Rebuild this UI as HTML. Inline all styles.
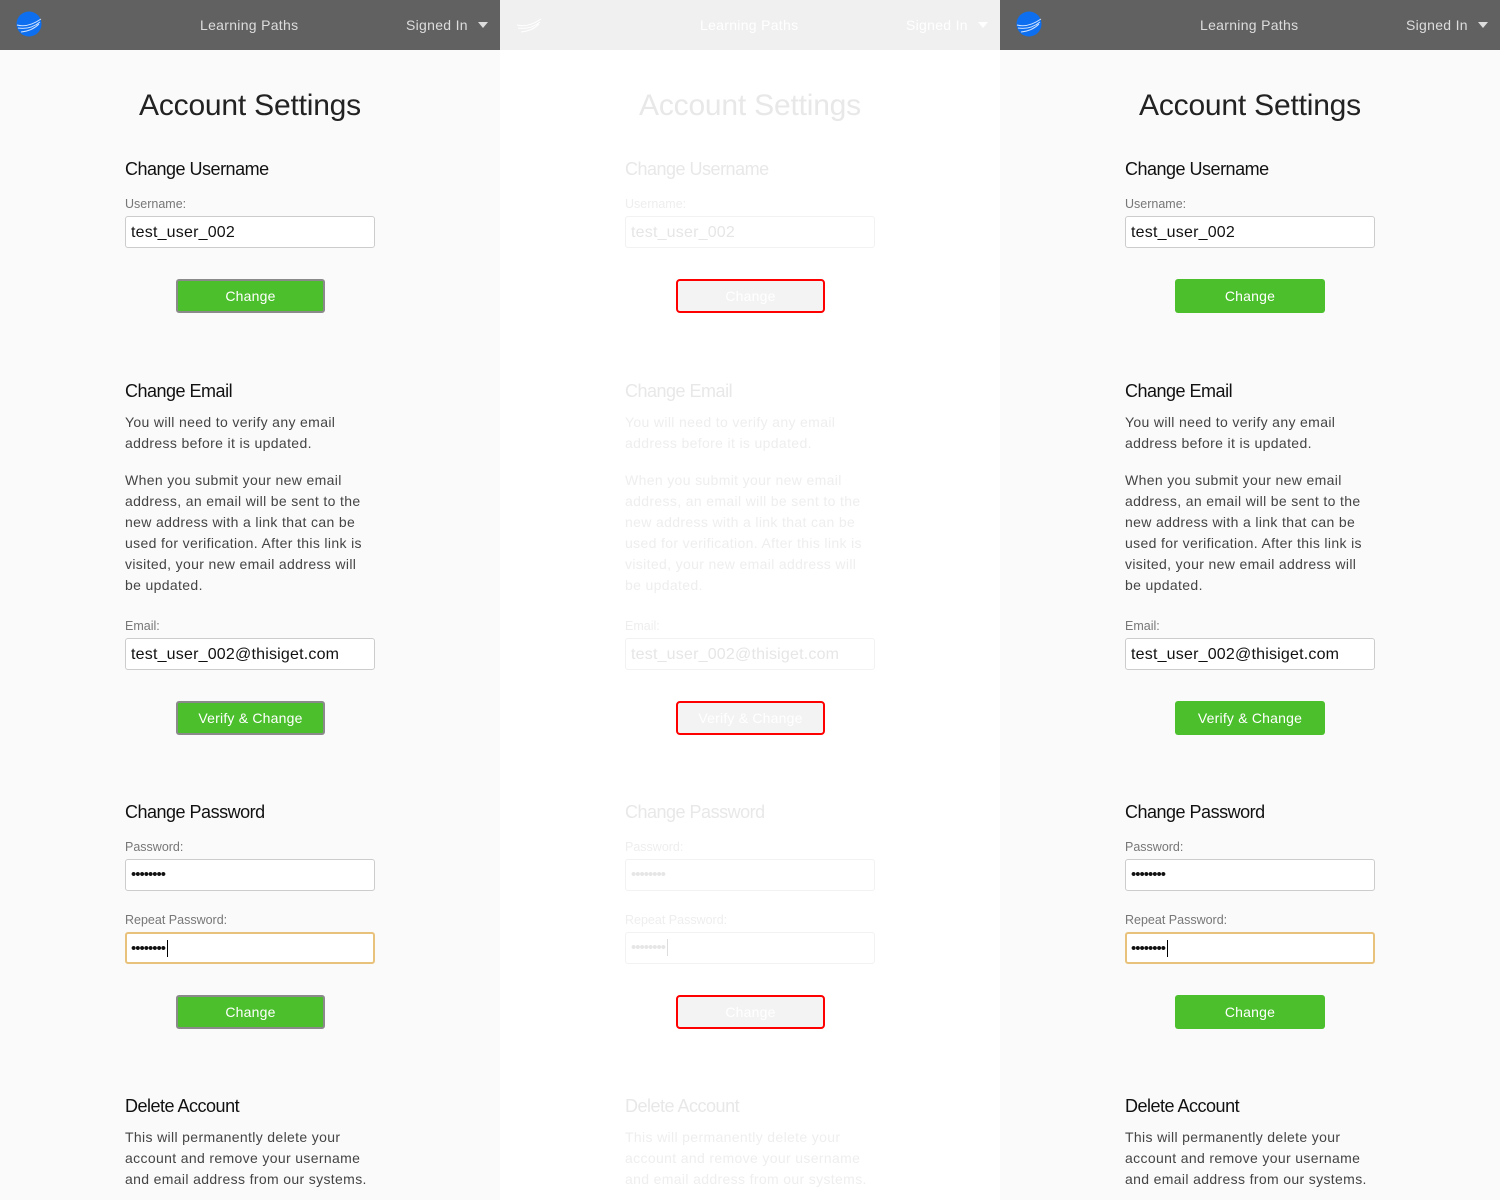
<!DOCTYPE html>
<html><head><meta charset="utf-8">
<style>
*{margin:0;padding:0;box-sizing:border-box}
body{width:1500px;height:1200px;overflow:hidden;font-family:"Liberation Sans",sans-serif;background:#fafafa}
.p{position:absolute;top:0;width:500px;height:1200px;background:#fafafa;color:#222}
.hd{position:absolute;left:0;top:0;width:500px;height:50px;background:#616161;color:#ddd;font-size:14px;letter-spacing:0.3px}
.hd .lp{position:absolute;left:200px;top:17px}
.hd .si{position:absolute;left:406px;top:17px}
.hd .tri{position:absolute;left:478px;top:22px;width:0;height:0;border-left:5px solid transparent;border-right:5px solid transparent;border-top:6px solid #ddd}
.logo{position:absolute;left:16px;top:11px}
.a{position:absolute;white-space:nowrap}
.t{left:0;width:500px;text-align:center;top:89px;font-size:30px;font-weight:300;color:#222;letter-spacing:-0.2px}
.h{left:125px;font-size:18px;color:#111;letter-spacing:-0.5px;top:0}
.l{left:125px;font-size:12.5px;color:#777}
.in{position:absolute;left:125px;width:250px;height:32px;background:#fff;border:1px solid #ccc;border-radius:3px;font-size:16px;padding:7px 5px;color:#111;letter-spacing:0.2px}
.in.f{border:2px solid #e8c27a;padding:6px 4px}
.pw{font-size:15px;letter-spacing:-1px;padding-top:6px !important}
.b{position:absolute;left:176px;width:149px;height:34px;background:#4cbf2c;color:#fff;text-align:center;font-size:14px;line-height:30px;border:2px solid #8a8a8a;border-radius:3px;letter-spacing:0.2px}
.x{left:125px;font-size:14px;line-height:21px;color:#444;letter-spacing:0.35px}
.r .b{border:none;line-height:34px}
.m{background:#fff}
.m .hd{background:#f0f0f0;color:#fff}
.m .hd .tri{border-top-color:#fff}
.m .t,.m .h{color:#e8e8e8}
.m .l,.m .x{color:#eee}
.m .in{border-color:#f2f2f2;color:#e6e6e6}
.m .b{background:#f3f3f3;border:2px solid #f00;color:#fff;border-radius:4px}
</style></head><body>

<div class="p" style="left:0">
<div class="hd"><svg class="logo" width="26" height="26" viewBox="0 0 26 26"><circle cx="13" cy="13" r="12.5" fill="#0d6ff0"/><path d="M1 14 Q12 17 25 8 M2 17 Q14 19 24 11 M5 21 Q16 20 23 13" stroke="#cfe2ff" stroke-width="1" fill="none"/></svg><span class="lp">Learning Paths</span><span class="si">Signed In</span><span class="tri"></span></div>
<div class="a t">Account Settings</div>
<div class="a h" style="top:159px">Change Username</div>
<div class="a l" style="top:197px">Username:</div>
<div class="in" style="top:216px">test_user_002</div>
<div class="b" style="top:279px">Change</div>
<div class="a h" style="top:381px">Change Email</div>
<div class="a x" style="top:412px">You will need to verify any email<br>address before it is updated.</div>
<div class="a x" style="top:470px">When you submit your new email<br>address, an email will be sent to the<br>new address with a link that can be<br>used for verification. After this link is<br>visited, your new email address will<br>be updated.</div>
<div class="a l" style="top:619px">Email:</div>
<div class="in" style="top:638px">test_user_002@thisiget.com</div>
<div class="b" style="top:701px">Verify &amp; Change</div>
<div class="a h" style="top:802px">Change Password</div>
<div class="a l" style="top:840px">Password:</div>
<div class="in pw" style="top:859px">••••••••</div>
<div class="a l" style="top:913px">Repeat Password:</div>
<div class="in f pw" style="top:932px">••••••••<span style="border-left:1px solid #000;margin-left:2px"> </span></div>
<div class="b" style="top:995px">Change</div>
<div class="a h" style="top:1096px">Delete Account</div>
<div class="a x" style="top:1127px">This will permanently delete your<br>account and remove your username<br>and email address from our systems.</div>
</div>

<div class="p m" style="left:500px">
<div class="hd"><svg class="logo" width="26" height="26" viewBox="0 0 26 26"><path d="M1 14 Q12 17 25 8 M2 17 Q14 19 24 11 M5 21 Q16 20 23 13" stroke="#fff" stroke-width="1" fill="none"/></svg><span class="lp">Learning Paths</span><span class="si">Signed In</span><span class="tri"></span></div>
<div class="a t">Account Settings</div>
<div class="a h" style="top:159px">Change Username</div>
<div class="a l" style="top:197px">Username:</div>
<div class="in" style="top:216px">test_user_002</div>
<div class="b" style="top:279px">Change</div>
<div class="a h" style="top:381px">Change Email</div>
<div class="a x" style="top:412px">You will need to verify any email<br>address before it is updated.</div>
<div class="a x" style="top:470px">When you submit your new email<br>address, an email will be sent to the<br>new address with a link that can be<br>used for verification. After this link is<br>visited, your new email address will<br>be updated.</div>
<div class="a l" style="top:619px">Email:</div>
<div class="in" style="top:638px">test_user_002@thisiget.com</div>
<div class="b" style="top:701px">Verify &amp; Change</div>
<div class="a h" style="top:802px">Change Password</div>
<div class="a l" style="top:840px">Password:</div>
<div class="in pw" style="top:859px">••••••••</div>
<div class="a l" style="top:913px">Repeat Password:</div>
<div class="in pw" style="top:932px">••••••••<span style="border-left:1px solid #ddd;margin-left:2px"> </span></div>
<div class="b" style="top:995px">Change</div>
<div class="a h" style="top:1096px">Delete Account</div>
<div class="a x" style="top:1127px">This will permanently delete your<br>account and remove your username<br>and email address from our systems.</div>
</div>

<div class="p r" style="left:1000px">
<div class="hd"><svg class="logo" width="26" height="26" viewBox="0 0 26 26"><circle cx="13" cy="13" r="12.5" fill="#0d6ff0"/><path d="M1 14 Q12 17 25 8 M2 17 Q14 19 24 11 M5 21 Q16 20 23 13" stroke="#cfe2ff" stroke-width="1" fill="none"/></svg><span class="lp">Learning Paths</span><span class="si">Signed In</span><span class="tri"></span></div>
<div class="a t">Account Settings</div>
<div class="a h" style="top:159px">Change Username</div>
<div class="a l" style="top:197px">Username:</div>
<div class="in" style="top:216px">test_user_002</div>
<div class="b" style="top:279px;left:175px;width:150px">Change</div>
<div class="a h" style="top:381px">Change Email</div>
<div class="a x" style="top:412px">You will need to verify any email<br>address before it is updated.</div>
<div class="a x" style="top:470px">When you submit your new email<br>address, an email will be sent to the<br>new address with a link that can be<br>used for verification. After this link is<br>visited, your new email address will<br>be updated.</div>
<div class="a l" style="top:619px">Email:</div>
<div class="in" style="top:638px">test_user_002@thisiget.com</div>
<div class="b" style="top:701px;left:175px;width:150px">Verify &amp; Change</div>
<div class="a h" style="top:802px">Change Password</div>
<div class="a l" style="top:840px">Password:</div>
<div class="in pw" style="top:859px">••••••••</div>
<div class="a l" style="top:913px">Repeat Password:</div>
<div class="in f pw" style="top:932px">••••••••<span style="border-left:1px solid #000;margin-left:2px"> </span></div>
<div class="b" style="top:995px;left:175px;width:150px">Change</div>
<div class="a h" style="top:1096px">Delete Account</div>
<div class="a x" style="top:1127px">This will permanently delete your<br>account and remove your username<br>and email address from our systems.</div>
</div>
</body></html>
